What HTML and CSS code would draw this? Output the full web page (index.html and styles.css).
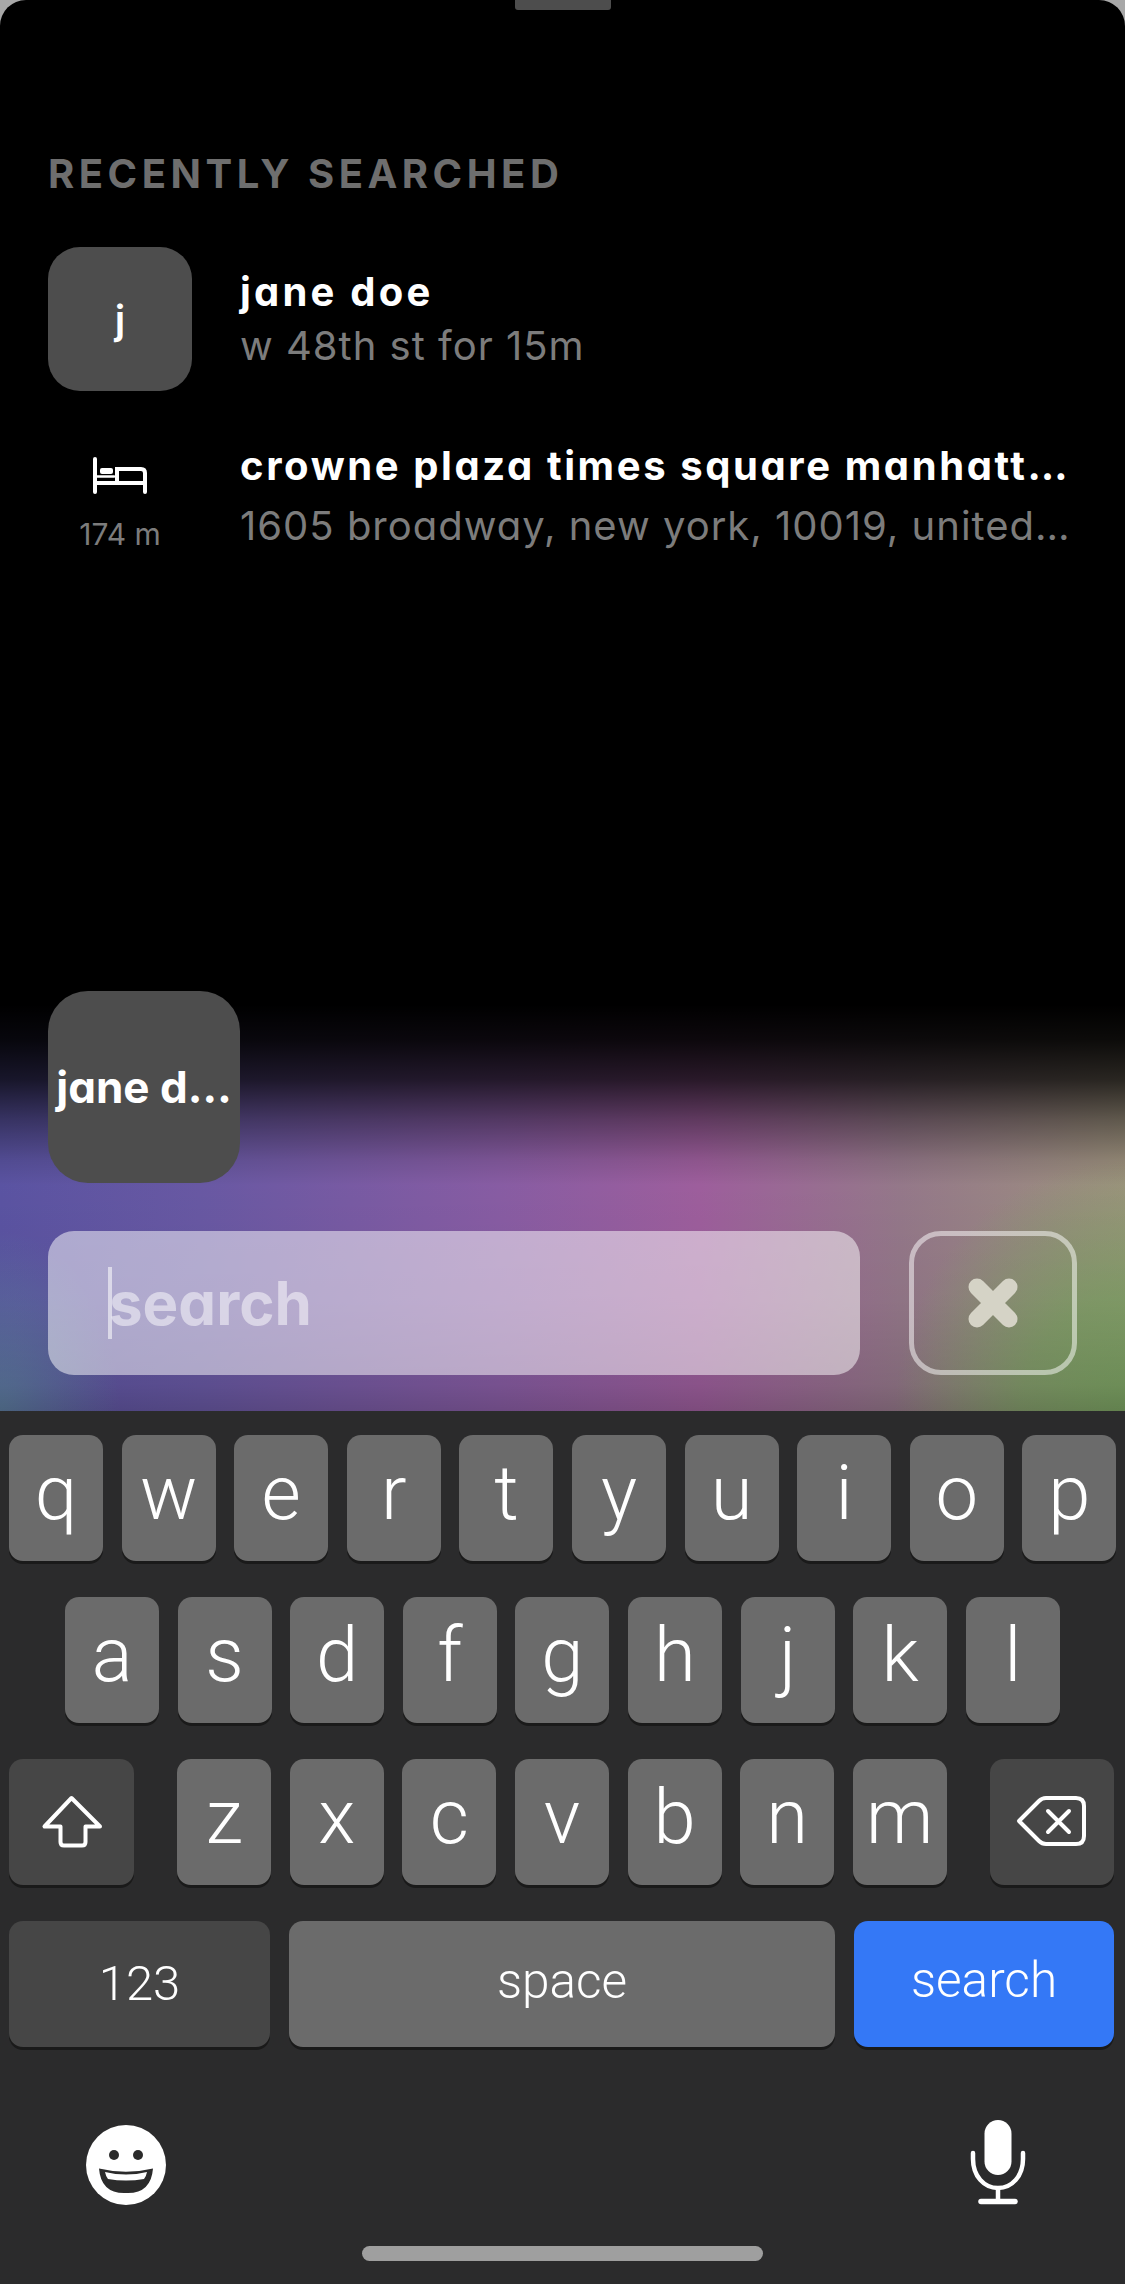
FILE: index.html
```html
<!DOCTYPE html>
<html lang="en">
<head>
<meta charset="utf-8">
<title>Search</title>
<link rel="stylesheet" href="styles.css">
</head>
<body>
<div class="screen">
  <main class="sheet">
    <div class="handle"></div>
    <h2 class="heading">RECENTLY SEARCHED</h2>
    <div class="result result-person">
      <div class="avatar">j</div>
      <div class="result-text">
        <div class="title">jane doe</div>
        <div class="sub">w 48th st for 15m</div>
      </div>
    </div>
    <div class="result result-place">
      <div class="place-icon">
        <svg class="bed" viewBox="0 0 54 37" width="54" height="37"><g fill="none" stroke="#fff" stroke-width="4" stroke-linecap="round"><path d="M2 2V35"/><path d="M52 35V16Q52 12 48 12H24V24"/><path d="M2 26H52"/><path d="M2 19.500H21" stroke-width="2.500"/></g><rect x="7" y="11" width="13" height="6" rx="2" fill="#fff"/></svg>
        <div class="dist">174 m</div>
      </div>
      <div class="result-text">
        <div class="title title-long">crowne plaza times square manhatt…</div>
        <div class="sub sub-long">1605 broadway, new york, 10019, united…</div>
      </div>
    </div>
    <div class="chip">jane d…</div>
    <div class="search-row">
      <div class="field"><span class="caret"></span><span class="placeholder">search</span></div>
      <div class="close">
        <svg viewBox="0 0 50 50" width="50" height="50"><path d="M9 9L41 41M41 9L9 41" stroke="#d5d3c6" stroke-width="17" stroke-linecap="round" fill="none"/></svg>
      </div>
    </div>
  </main>
  <section class="keyboard">
    <div class="row row-1">
      <div class="key">q</div><div class="key">w</div><div class="key">e</div><div class="key">r</div><div class="key">t</div><div class="key">y</div><div class="key">u</div><div class="key">i</div><div class="key">o</div><div class="key">p</div>
    </div>
    <div class="row row-2">
      <div class="key">a</div><div class="key">s</div><div class="key">d</div><div class="key">f</div><div class="key">g</div><div class="key">h</div><div class="key">j</div><div class="key">k</div><div class="key">l</div>
    </div>
    <div class="row row-3">
      <div class="key key-dark key-shift">
        <svg viewBox="0 0 62 54" width="62" height="54"><path d="M30.500 3L3.500 31.500H19.500V47Q19.500 50.500 23 50.500H41Q44.500 50.500 44.500 47V31.500H59Z" fill="none" stroke="#fff" stroke-width="4" stroke-linejoin="round"/></svg>
      </div>
      <div class="key">z</div><div class="key">x</div><div class="key">c</div><div class="key">v</div><div class="key">b</div><div class="key">n</div><div class="key">m</div>
      <div class="key key-dark key-delete">
        <svg viewBox="0 0 72 54" width="72" height="54"><path d="M3 26L23 6Q26 3 30 3H60Q68 3 68 11V41Q68 49 60 49H30Q26 49 23 46Z" fill="none" stroke="#fff" stroke-width="4" stroke-linejoin="round"/><path d="M32 16L53 37M53 16L32 37" fill="none" stroke="#fff" stroke-width="4" stroke-linecap="round"/></svg>
      </div>
    </div>
    <div class="row row-4">
      <div class="key key-dark key-num">123</div>
      <div class="key key-space">space</div>
      <div class="key key-go">search</div>
    </div>
    <div class="kb-tools">
      <svg class="emoji" viewBox="0 0 80 80" width="80" height="80">
        <circle cx="40" cy="40" r="40" fill="#fff"/>
        <circle cx="28" cy="30" r="5" fill="#2b2b2b"/><circle cx="52" cy="30" r="5" fill="#2b2b2b"/>
        <path d="M13 43.500Q40 50 67 43.500Q65 69 40 68Q15 69 13 43.500Z" fill="#2b2b2b"/>
        <path d="M19 47Q40 52 61 47Q60 52 58 54Q40 57 22 54Q20 52 19 47Z" fill="#fff"/>
      </svg>
      <svg class="mic" viewBox="0 0 56 85" width="56" height="85">
        <rect x="14.500" y="0" width="27" height="55" rx="13.500" fill="#fff"/>
        <path d="M3 33V39C3 56 14 68 28 68C42 68 53 56 53 39V33" fill="none" stroke="#fff" stroke-width="4.500" stroke-linecap="round"/>
        <path d="M28 68V81" stroke="#fff" stroke-width="4.500"/>
        <path d="M11 81.500H45" stroke="#fff" stroke-width="5.500" stroke-linecap="round"/>
      </svg>
    </div>
    <div class="home-bar"></div>
  </section>
</div>
</body>
</html>
```
FILE: styles.css
```css
* { box-sizing: border-box; }
html, body { margin: 0; padding: 0; background: #a8a8a8; }
body { width: 1125px; height: 2284px; overflow: hidden; }
.screen { width: 1125px; height: 2284px; display: flex; flex-direction: column; font-family: Inter, "Liberation Sans", sans-serif; font-feature-settings: "cv11"; }

.sheet {
  height: 1411px;
  border-radius: 26px 26px 0 0;
  display: flex;
  flex-direction: column;
  padding: 0 48px 36px;
  background:
    linear-gradient(180deg, #000 0, #000 1005px, rgba(0,0,0,.92) 1040px, rgba(0,0,0,.74) 1080px, rgba(0,0,0,.4) 1120px, rgba(0,0,0,.12) 1160px, rgba(0,0,0,.02) 1185px, rgba(0,0,0,.06) 1300px, rgba(0,0,0,.14) 1385px, rgba(0,0,0,.22) 1411px),
    radial-gradient(ellipse 230px 250px at 100% 100%, rgba(125,165,100,1) 0, rgba(125,165,100,.75) 45%, rgba(125,165,100,0) 100%),
    radial-gradient(ellipse 120px 180px at 0 100%, rgba(95,140,160,.75) 0, rgba(95,140,160,0) 100%),
    linear-gradient(90deg, #5c55a5 0, #6a5aa6 200px, #8a5ea6 500px, #a0609f 700px, #977a8c 900px, #a09480 1125px);
}
.handle { width: 96px; height: 10px; margin: 0 auto; background: #4d4d4d; border-radius: 0 0 3px 3px; }
.heading { margin: 140px 0 0; font-size: 40px; line-height: 48px; font-weight: 700; letter-spacing: 4.5px; color: #6e6e6e; }

.result { display: flex; align-items: center; }
.result-person { margin-top: 49px; height: 144px; }
.result-person .result-text { gap: 2px; }
.result-place { margin-top: 45px; height: 120px; }
.avatar { width: 144px; height: 144px; flex: none; border-radius: 32px; background: #4d4d4d; color: #fff; font-size: 40px; font-weight: 600; display: flex; align-items: center; justify-content: center; }
.result-text { margin-left: 48px; display: flex; flex-direction: column; white-space: nowrap; }
.title { font-size: 40px; line-height: 52px; font-weight: 700; letter-spacing: 3.2px; color: #fff; }
.sub { font-size: 40px; line-height: 52px; font-weight: 400; letter-spacing: 1px; color: #7c7c7c; }
.title-long { line-height: 60px; letter-spacing: 2.6px; }
.sub-long { line-height: 60px; }
.place-icon { width: 144px; flex: none; display: flex; flex-direction: column; align-items: center; padding-top: 16px; }
.bed { display: block; }
.dist { margin-top: 23px; font-size: 30px; line-height: 34px; color: #7c7c7c; }

.chip { margin-top: auto; width: 192px; height: 192px; border-radius: 40px; background: #4d4d4d; color: #fff; font-size: 44px; font-weight: 700; display: flex; align-items: center; justify-content: center; white-space: nowrap; }
.search-row { margin-top: 48px; display: flex; justify-content: space-between; height: 144px; }
.field { width: 812px; border-radius: 26px; background: rgba(255,255,255,.5); display: flex; align-items: center; padding-left: 60px; }
.caret { width: 4px; height: 72px; margin-right: -3px; background: rgba(255,255,255,.55); }
.placeholder { font-size: 60px; font-weight: 700; color: rgba(255,255,255,.5); }
.close { width: 168px; border: 5px solid rgba(255,255,255,.5); border-radius: 32px; display: flex; align-items: center; justify-content: center; }

.keyboard { flex: 1; background: #2b2b2c; padding-top: 24px; }
.row { display: flex; gap: 18.6px; height: 126px; margin-bottom: 36px; padding: 0 9px; }
.row-2 { padding-left: 65px; }
.key { width: 94px; height: 126px; flex: none; border-radius: 14px; background: #6b6b6b; box-shadow: 0 3px 0 #1a1a1a; color: #fff; font-family: Roboto, "Liberation Sans", sans-serif; font-weight: 350; font-size: 76px; line-height: 116px; text-align: center; font-feature-settings: normal; }
.key-dark { background: #464646; display: flex; align-items: center; justify-content: center; }
.key-shift { width: 125px; margin-right: 24.600px; }
.key-delete { width: 124px; margin-left: 24.600px; }
.row-4 { gap: 19px; }
.key-num { width: 261px; font-size: 49px; line-height: 126px; }
.key-space { width: 546px; font-size: 49.500px; line-height: 120px; }
.key-go { width: 260px; background: #3478f6; font-size: 49.500px; line-height: 118px; }
.kb-tools { margin-top: 73px; height: 85px; display: flex; justify-content: space-between; align-items: flex-end; padding: 0 99px 0 86px; }
.home-bar { width: 401px; height: 15px; margin: 41px auto 0; border-radius: 8px; background: #9f9f9f; }
```
